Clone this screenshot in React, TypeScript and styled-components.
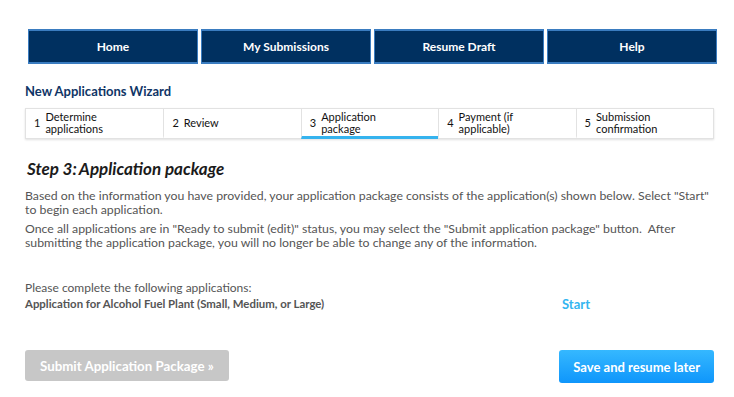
import styled, { createGlobalStyle } from 'styled-components';

const GlobalStyle = createGlobalStyle`
  body {
    margin: 0;
    background: #fff;
    font-family: Lato, "Open Sans", Arial, sans-serif;
  }
`;

const Page = styled.div`
  width: 689px;
  padding: 29px 0 0 25px;
`;

const Nav = styled.nav`
  display: grid;
  grid-template-columns: repeat(4, 170px);
  gap: 3px;
  margin-left: 3px;
`;

const NavButton = styled.button`
  height: 35px;
  background: #003060;
  border: 1px solid #3a7cc0;
  border-top-width: 2px;
  border-bottom-width: 2px;
  color: #fff;
  font-family: Lato, Arial, sans-serif;
  font-weight: 700;
  font-size: 12px;
  padding: 0;
`;

const WizardTitle = styled.h2`
  margin: 19px 0 9px;
  font-size: 13px;
  font-weight: 700;
  color: #0f3566;
  line-height: 16px;
`;

const Steps = styled.ol`
  display: grid;
  grid-template-columns: repeat(5, 1fr);
  margin: 0;
  padding: 0;
  list-style: none;
  border: 1px solid #e2e2e2;
  box-shadow: 0 1px 2px rgba(0, 0, 0, 0.12);
  height: 31px;
  box-sizing: border-box;
`;

const Step = styled.li<{ $active?: boolean }>`
  display: flex;
  align-items: center;
  gap: 5px;
  padding: 0 8px;
  border-left: 1px solid #e2e2e2;
  border-bottom: 3px solid ${({ $active }) => ($active ? '#35b3ee' : 'transparent')};
  margin-bottom: -1px;
  color: #111;
  font-size: 11px;
  &:first-child {
    border-left: none;
  }
`;

const StepNum = styled.span`
  font-size: 11px;
`;

const StepLabel = styled.span`
  line-height: 12px;
`;

const StepHeading = styled.h1`
  margin: 20px 0 10px 2px;
  font-size: 17px;
  font-style: italic;
  font-weight: 700;
  color: #1b1b1b;
  line-height: 20px;
`;

const Para = styled.p`
  margin: 0 0 5px;
  font-size: 12.3px;
  line-height: 14px;
  color: #555;
`;

const AppList = styled.div`
  margin-top: 30px;
  color: #555;
`;

const ListLabel = styled.div`
  font-size: 12px;
  line-height: 16px;
`;

const AppRow = styled.div`
  display: grid;
  grid-template-columns: 537px auto;
  align-items: center;
  line-height: 16px;
`;

const AppName = styled.span`
  font-size: 11.4px;
  font-weight: 700;
`;

const StartLink = styled.a`
  font-size: 13px;
  font-weight: 700;
  color: #33b5f0;
  text-decoration: none;
  margin-top: -1px;
`;

const Actions = styled.div`
  display: flex;
  justify-content: space-between;
  align-items: flex-start;
  margin-top: 38px;
`;

const Button = styled.button<{ $primary?: boolean }>`
  border: none;
  border-radius: 3px;
  color: #fff;
  font-family: Lato, Arial, sans-serif;
  font-weight: 700;
  font-size: ${({ $primary }) => ($primary ? '13px' : '13.3px')};
  height: ${({ $primary }) => ($primary ? '33px' : '31px')};
  padding: ${({ $primary }) => ($primary ? '0 14px' : '0 15px')};
  background: ${({ $primary }) =>
    $primary ? 'linear-gradient(#35b8ff, #0f96fb)' : '#c7c7c7'};
`;

const navItems = ['Home', 'My Submissions', 'Resume Draft', 'Help'];

const steps = [
  ['Determine', 'applications'],
  ['Review'],
  ['Application', 'package'],
  ['Payment (if', 'applicable)'],
  ['Submission', 'confirmation'],
];

export default function App() {
  return (
    <Page>
      <GlobalStyle />
      <Nav>
        {navItems.map((item) => (
          <NavButton key={item}>{item}</NavButton>
        ))}
      </Nav>

      <WizardTitle>New Applications Wizard</WizardTitle>
      <Steps>
        {steps.map((lines, i) => (
          <Step key={i} $active={i === 2}>
            <StepNum>{i + 1}</StepNum>
            <StepLabel>
              {lines.map((l, j) => (
                <span key={j}>
                  {j > 0 && <br />}
                  {l}
                </span>
              ))}
            </StepLabel>
          </Step>
        ))}
      </Steps>

      <StepHeading>Step 3:&thinsp;Application package</StepHeading>
      <Para>
        Based on the information you have provided, your application package consists of the
        application(s) shown below. Select "Start" to begin each application.
      </Para>
      <Para>
        Once all applications are in "Ready to submit (edit)" status, you may select the "Submit
        application package" button.&nbsp; After submitting the application package, you will no
        longer be able to change any of the information.
      </Para>

      <AppList>
        <ListLabel>Please complete the following applications:</ListLabel>
        <AppRow>
          <AppName>Application for Alcohol Fuel Plant (Small, Medium, or Large)</AppName>
          <StartLink href="#">Start</StartLink>
        </AppRow>
      </AppList>

      <Actions>
        <Button>Submit Application Package »</Button>
        <Button $primary>Save and resume later</Button>
      </Actions>
    </Page>
  );
}
